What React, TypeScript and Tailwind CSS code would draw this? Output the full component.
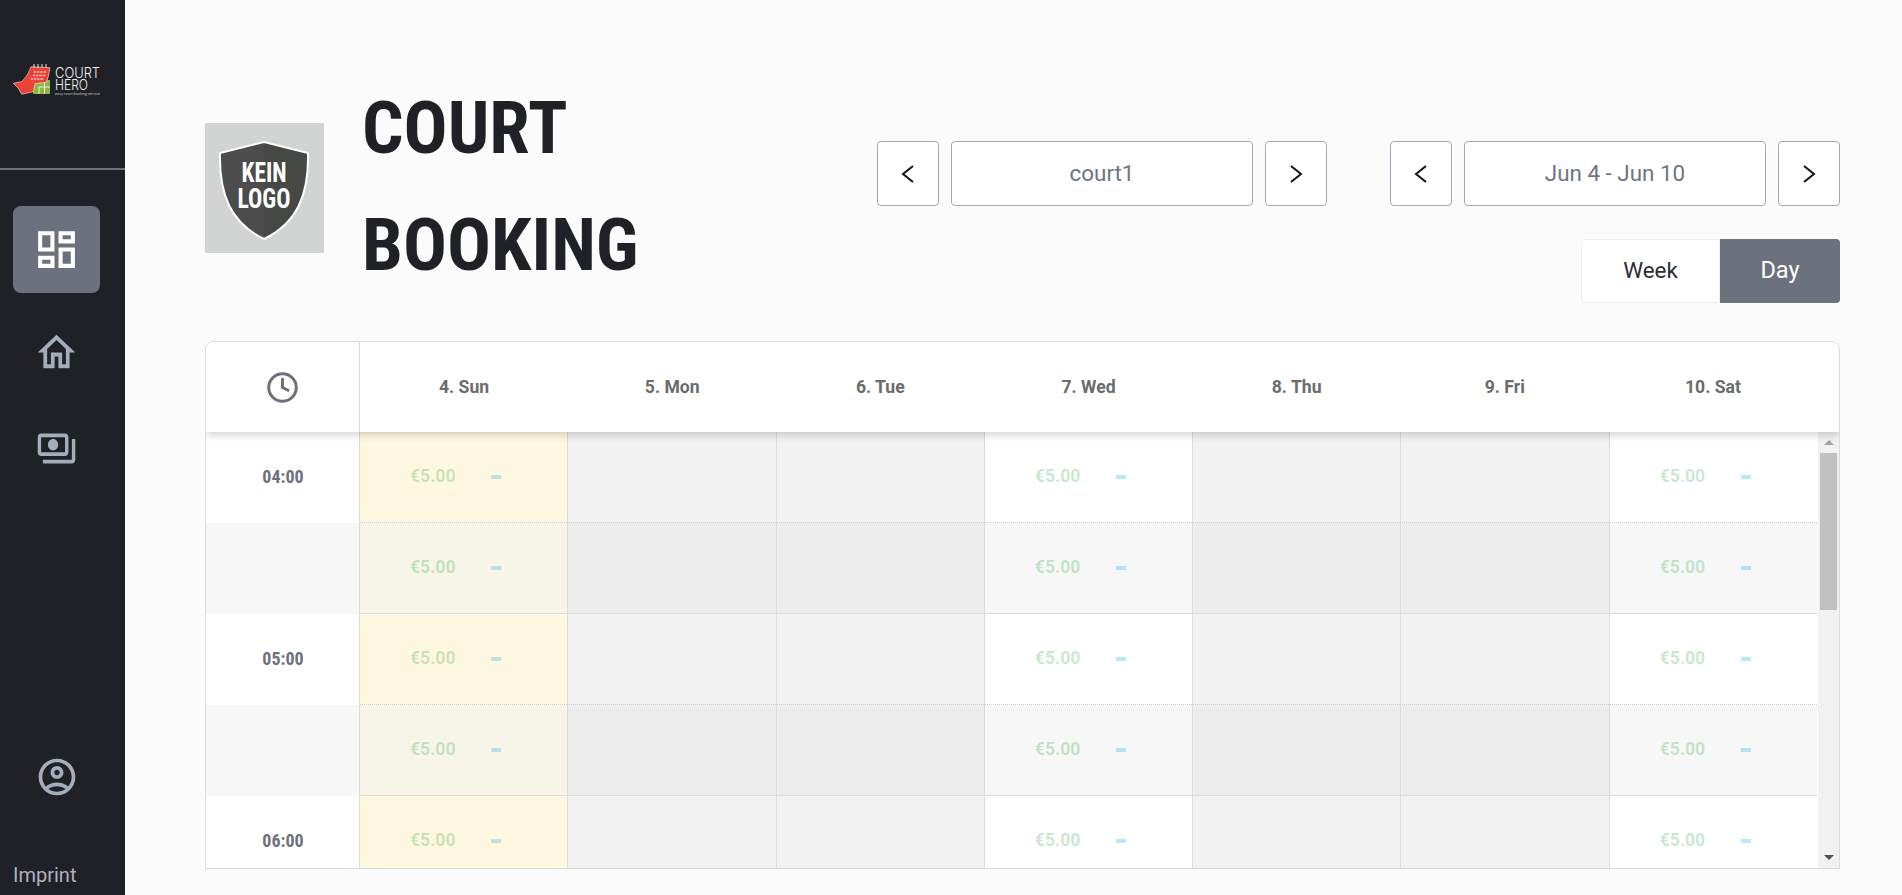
import React from "react"
import { MdOutlineAccountCircle, MdOutlineDashboard, MdOutlineHome, MdOutlinePayments } from "react-icons/md"
import { Clock } from "lucide-react"

const days = ["4. Sun", "5. Mon", "6. Tue", "7. Wed", "8. Thu", "9. Fri", "10. Sat"]
const kinds = ["today", "closed", "closed", "open", "closed", "closed", "open"]
const rows = [
  { time: "04:00", half: false },
  { time: "", half: true },
  { time: "05:00", half: false },
  { time: "", half: true },
  { time: "06:00", half: false },
]

const cellColor = (kind: string, half: boolean) => {
  if (kind === "today") return half ? "bg-[#f7f5e8]" : "bg-[#fff8e0]"
  if (kind === "closed") return half ? "bg-[#ededed]" : "bg-[#f2f2f2]"
  return half ? "bg-[#f7f7f7]" : "bg-white"
}

const CourtHeroLogo = () => (
  <svg width="87" height="40" viewBox="0 -4 87 40" className="block">
    <rect x="20" y="20" width="17" height="14" fill="#8fb640" />
    <path d="M26 34 L26 27 L37 27 M31.5 21 L31.5 34" stroke="#e8eee0" strokeWidth="1" fill="none" />
    <path
      d="M18 6.7 L37 7.7 Q36 15 33.7 22.3 L22 23.5 L20.3 31.7 L8.7 34.3 L5.3 28.3 L0.3 23.3 L9 21.5 Q15.5 15 18 6.7 Z"
      fill="#ea4335"
      stroke="#f0e6e4"
      strokeWidth="0.6"
    />
    <path d="M21 4 v4 M25 4 v4 M29 4 v4 M33 4 v4" stroke="#e8e8e8" strokeWidth="1" />
    <path d="M21 12 h13 M20 15.5 h13 M18 19 h13" stroke="#ffd5ce" strokeWidth="1.5" strokeDasharray="2 1.2" />
    <text x="42" y="18" fontFamily="Inter, sans-serif" fontSize="14" fontWeight="300" fill="#f2f2f2" textLength="45" lengthAdjust="spacingAndGlyphs">
      COURT
    </text>
    <text x="42" y="29.5" fontFamily="Inter, sans-serif" fontSize="14" fontWeight="300" fill="#f2f2f2" textLength="33" lengthAdjust="spacingAndGlyphs">
      HERO
    </text>
    <text x="42" y="34.5" fontFamily="Inter, sans-serif" fontSize="3" fill="#c9c9c9" textLength="45" lengthAdjust="spacingAndGlyphs">
      easy court booking service
    </text>
  </svg>
)

const KeinLogo = () => (
  <svg width="119" height="130" viewBox="0 0 119 130" className="mt-[2px] block bg-[#d2d4d3]">
    <path d="M59 19 L103 30 C104 72 92 100 59 116 C26 100 14 72 15 30 Z" fill="#4c4c4c" />
    <path d="M59 19 L103 30 C104 72 92 100 59 116 Z" fill="#464846" />
    <path d="M59 19 L103 30 C104 72 92 100 59 116 C26 100 14 72 15 30 Z" fill="none" stroke="#fff" strokeWidth="2" />
    <text x="59" y="59" textAnchor="middle" fontFamily="'Roboto Condensed', Roboto, sans-serif" fontWeight="700" fontSize="28" fill="#fff" textLength="45" lengthAdjust="spacingAndGlyphs">
      KEIN
    </text>
    <text x="59" y="85" textAnchor="middle" fontFamily="'Roboto Condensed', Roboto, sans-serif" fontWeight="700" fontSize="28" fill="#fff" textLength="53" lengthAdjust="spacingAndGlyphs">
      LOGO
    </text>
  </svg>
)

const Chevron = ({ right }: { right?: boolean }) => (
  <svg width="14" height="20" viewBox="0 0 14 20" fill="none" stroke="#111" strokeWidth="2">
    <path d={right ? "M2 2 L12 10 L2 18" : "M12 2 L2 10 L12 18"} />
  </svg>
)

const Picker = ({ label }: { label: string }) => (
  <div className="flex gap-3">
    <button className="flex h-[65px] w-[62px] items-center justify-center rounded border border-[#a0a8b8] bg-white">
      <Chevron />
    </button>
    <div className="flex h-[65px] w-[302px] items-center justify-center rounded border border-[#a0a8b8] bg-white text-[22.4px] text-[#6f7482]">
      {label}
    </div>
    <button className="flex h-[65px] w-[62px] items-center justify-center rounded border border-[#a0a8b8] bg-white">
      <Chevron right />
    </button>
  </div>
)

const Sidebar = () => (
  <aside className="flex h-[895px] w-[125px] shrink-0 flex-col bg-[#1f2126] text-[#a5adbb]">
    <div className="flex h-[170px] items-start border-b-2 border-[#6d717d] pl-[13px] pt-[56px]">
      <CourtHeroLogo />
    </div>
    <div className="mt-9 ml-[13px] flex h-[87px] w-[87px] items-center justify-center rounded-lg bg-[#6d717d] text-white">
      <MdOutlineDashboard size={49} />
    </div>
    <div className="mt-4 ml-[13px] flex h-[87px] w-[87px] items-center justify-center">
      <MdOutlineHome size={45} className="scale-y-105" />
    </div>
    <div className="mt-[9px] ml-[13px] flex h-[87px] w-[87px] items-center justify-center">
      <MdOutlinePayments size={41} className="scale-y-110" />
    </div>
    <div className="mt-auto ml-[13px] flex w-[87px] justify-center">
      <MdOutlineAccountCircle size={44} />
    </div>
    <div className="mt-[64px] mb-2 pl-[13px] text-[20px] leading-6 text-[#aeb3bd]">Imprint</div>
  </aside>
)

const Scrollbar = () => (
  <div className="ml-px flex w-[21px] shrink-0 flex-col items-center bg-[#f1f1f1]">
    <div className="mt-2 h-0 w-0 border-x-[5px] border-b-[5px] border-x-transparent border-b-[#a3a3a3]" />
    <div className="mt-[8px] h-[157px] w-[17px] bg-[#c1c1c1]" />
    <div className="mt-auto mb-2 h-0 w-0 border-x-[5px] border-t-[5px] border-x-transparent border-t-[#505050]" />
  </div>
)

const Cell = ({ kind, half }: { kind: string; half: boolean }) => (
  <div
    className={`flex h-[91px] items-center border-l border-[#dcdcdc] pb-[2px] pl-[50px] ${cellColor(kind, half)} ${
      half ? "border-b border-b-[#dcdcdc]" : "border-b border-b-[#cfcfcf] [border-bottom-style:dotted]"
    }`}
  >
    {kind !== "closed" && (
      <>
        <span className="w-[81px] text-[17.6px] font-bold text-[#1fa53a]/25">€5.00</span>
        <span className="-ml-[2px] text-[36px] leading-none font-bold text-[#1aa7ec]/30">-</span>
      </>
    )}
  </div>
)

const App: React.FC = () => {
  return (
    <div className="flex h-[895px] w-[1902px] overflow-hidden bg-[#fbfbfb] font-['Roboto',sans-serif]">
      <Sidebar />
      <main className="flex min-w-0 flex-1 flex-col pr-[62px] pb-[26px] pl-[80px]">
        <header className="flex h-[341px] shrink-0 items-start justify-between pt-[70px]">
          <div className="flex items-center gap-[38px]">
            <KeinLogo />
            <h1 className="font-['Roboto_Condensed',Roboto,sans-serif] text-[73px] leading-[117px] font-bold font-stretch-condensed text-[#1f2126]">
              COURT
              <br />
              BOOKING
            </h1>
          </div>
          <div className="flex flex-col items-end gap-[33px] pt-[71px]">
            <div className="flex gap-[63px]">
              <Picker label="court1" />
              <Picker label="Jun 4 - Jun 10" />
            </div>
            <div className="flex h-[64px]">
              <button className="w-[139px] rounded-l border border-[#eeeeee] bg-white text-[22.4px] text-[#2c2d33]">Week</button>
              <button className="w-[120px] rounded-r bg-[#6d717d] text-[23.5px] text-white">Day</button>
            </div>
          </div>
        </header>

        <section className="flex min-h-0 flex-1 flex-col overflow-hidden rounded-t-lg border border-[#dcdcdc] bg-white">
          <div className="relative z-10 flex h-[90px] shrink-0 bg-white shadow-[0_3px_8px_rgba(0,0,0,0.18)]">
            <div className="flex w-[153px] shrink-0 items-center justify-center text-[#6d717d]">
              <Clock size={33} strokeWidth={2.2} />
            </div>
            <div className="grid flex-1 grid-cols-7 border-l border-[#dcdcdc] pr-[22px]">
              {days.map((day) => (
                <div key={day} className="flex items-center justify-center text-[17.6px] font-bold text-[#6b6b6b]">
                  {day}
                </div>
              ))}
            </div>
          </div>
          <div className="flex min-h-0 flex-1">
            <div className="flex min-w-0 flex-1 flex-col overflow-hidden">
              {rows.map((row, i) => (
                <div key={i} className="flex shrink-0">
                  <div
                    className={`flex h-[91px] w-[153px] shrink-0 items-center justify-center pb-[2px] pl-px font-['Roboto_Condensed',Roboto,sans-serif] text-lg font-bold font-stretch-condensed text-[#6d717d] ${
                      row.half ? "bg-[#f7f7f7]" : "bg-white"
                    }`}
                  >
                    {row.time}
                  </div>
                  <div className="grid flex-1 grid-cols-7">
                    {kinds.map((kind, k) => (
                      <Cell key={k} kind={kind} half={row.half} />
                    ))}
                  </div>
                </div>
              ))}
            </div>
            <Scrollbar />
          </div>
        </section>
      </main>
    </div>
  )
}

export default App
